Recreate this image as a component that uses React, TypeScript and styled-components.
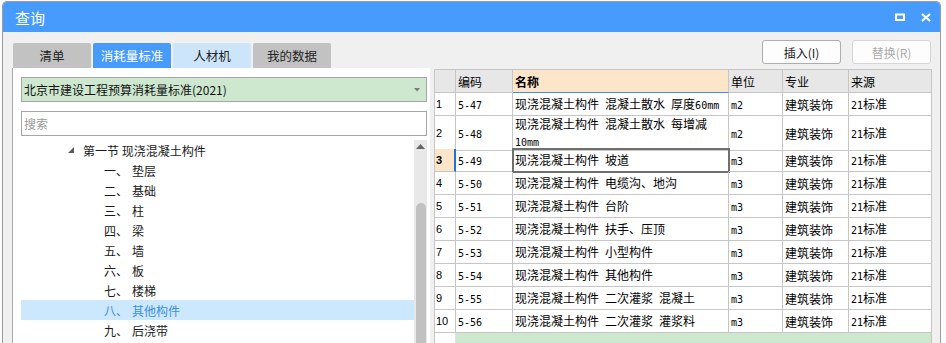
import React from 'react';
import styled, { createGlobalStyle } from 'styled-components';

const GlobalStyle = createGlobalStyle`
  html, body {
    margin: 0;
    padding: 0;
    background: #fbfbfb;
    overflow: hidden;
  }
  body {
    font-family: "Noto Sans CJK SC", "Noto Sans", sans-serif;
    font-size: 12px;
    color: #1a1a1a;
  }
`;

const Window = styled.div`
  box-sizing: border-box;
  width: 939px;
  height: 342px;
  margin: 1px 0 0 2px;
  border: 1px solid #9c9c9c;
  border-bottom: none;
  border-radius: 5px 5px 0 0;
  overflow: hidden;
  display: flex;
  flex-direction: column;
  background: #f0f0f0;
`;

const TitleBar = styled.div`
  height: 30px;
  flex: none;
  background: #479bfd;
  color: #fff;
  display: flex;
  align-items: center;
  justify-content: space-between;
  padding: 0 9px 0 12px;
  font-size: 15px;
`;

const TitleIcons = styled.div`
  display: flex;
  align-items: center;
  gap: 16px;
`;

const Body = styled.div`
  flex: 1;
  display: flex;
  min-height: 0;
`;

const LeftCol = styled.div`
  box-sizing: border-box;
  width: 427px;
  padding: 11px 0 0 9px;
  display: flex;
  flex-direction: column;
`;

const Tabs = styled.div`
  display: flex;
  gap: 2px;
  padding-left: 1px;
`;

type TabKind = 'plain' | 'active' | 'hover';

const tabBg: Record<TabKind, string> = {
  plain: '#c2c2c2',
  active: '#479bfd',
  hover: '#cce5fa',
};

const Tab = styled.div<{ $kind: TabKind }>`
  width: 78px;
  height: 25px;
  border-radius: 2px 2px 0 0;
  background: ${(p) => tabBg[p.$kind]};
  color: ${(p) => (p.$kind === 'active' ? '#fff' : '#222')};
  font-size: 12.5px;
  display: flex;
  align-items: center;
  justify-content: center;
`;

const Panel = styled.div`
  flex: 1;
  background: #fff;
  border-left: 1px solid #a9a9a9;
  padding: 9px 3px 0 8px;
  display: flex;
  flex-direction: column;
  min-height: 0;
`;

const Select = styled.div`
  box-sizing: border-box;
  height: 25px;
  border: 1px solid #a6a6a6;
  background: #cde8cf;
  display: flex;
  align-items: center;
  justify-content: space-between;
  padding: 0 6px 0 2px;
  color: #111;
`;

const Search = styled.div`
  box-sizing: border-box;
  height: 25px;
  margin-top: 9px;
  border: 1px solid #a6a6a6;
  display: flex;
  align-items: center;
  padding-left: 2px;
  color: #9b9b9b;
`;

const Tree = styled.div`
  margin-top: 4px;
  flex: 1;
  display: flex;
  min-height: 0;
`;

const TreeList = styled.div`
  flex: 1;
`;

const TreeRow = styled.div<{ $indent: number; $selected?: boolean }>`
  height: 20px;
  display: flex;
  align-items: center;
  padding-left: ${(p) => p.$indent}px;
  background: ${(p) => (p.$selected ? '#cce8ff' : 'transparent')};
  color: ${(p) => (p.$selected ? '#3b8de4' : '#1a1a1a')};
  white-space: pre;
`;

const Twisty = styled.span`
  display: inline-flex;
  width: 15px;
`;

const ItemNo = styled.span`
  width: 28px;
`;

const ScrollBar = styled.div`
  width: 13px;
  background: #e8e8e8;
  display: flex;
  flex-direction: column;
  align-items: center;
`;

const ScrollArrow = styled.div`
  height: 12px;
  display: flex;
  align-items: center;
  justify-content: center;
`;

const ScrollThumb = styled.div`
  margin-top: 51px;
  width: 10px;
  flex: 1;
  background: #c1c1c1;
  border-radius: 5px 5px 0 0;
`;

const RightCol = styled.div`
  flex: 1;
  box-sizing: border-box;
  padding: 8px 8px 0 4px;
  display: flex;
  flex-direction: column;
`;

const ButtonBar = styled.div`
  display: flex;
  justify-content: flex-end;
  gap: 11px;
  padding-right: 1px;
`;

const Button = styled.div<{ $disabled?: boolean }>`
  box-sizing: border-box;
  width: 79px;
  height: 24px;
  border: 1px solid ${(p) => (p.$disabled ? '#d6d6d6' : '#adadad')};
  border-radius: 3px;
  background: #fdfdfd;
  color: ${(p) => (p.$disabled ? '#ababab' : '#1a1a1a')};
  display: flex;
  align-items: center;
  justify-content: center;
`;

const Grid = styled.div`
  margin-top: 5px;
  width: 498px;
  box-sizing: border-box;
  border-left: 1px solid #c6c6c6;
  border-top: 1px solid #c6c6c6;
  background: #fff;
`;

const Row = styled.div<{ $h: number }>`
  display: grid;
  grid-template-columns: 21px 57px 216px 54px 66px 83px;
  height: ${(p) => p.$h}px;
`;

const Cell = styled.div<{ $bg?: string; $bold?: boolean; $blueBottom?: boolean }>`
  box-sizing: border-box;
  border-right: 1px solid #c6c6c6;
  border-bottom: 1px solid ${(p) => (p.$blueBottom ? '#3d8ee6' : '#c6c6c6')};
  background: ${(p) => p.$bg || 'transparent'};
  font-weight: ${(p) => (p.$bold ? 700 : 400)};
  padding-left: 2px;
  display: flex;
  align-items: center;
  color: #000;
`;

const CellText = styled.span`
  white-space: pre-line;
  line-height: 15px;
`;

const NumCell = styled(Cell)<{ $current?: boolean }>`
  font-family: "Liberation Sans", "DejaVu Sans", sans-serif;
  font-size: 11px;
  padding-left: 1px;
  border-right: ${(p) => (p.$current ? '2px solid #1c74e4' : '1px solid #c6c6c6')};
`;

const NameCell = styled(Cell)<{ $current?: boolean }>`
  outline: ${(p) => (p.$current ? '2px solid #6f6f6f' : 'none')};
  outline-offset: -1px;
`;

const FillRow = styled.div`
  display: grid;
  grid-template-columns: 21px 1fr;
  height: 20px;
`;

const FillNum = styled.div`
  border-right: 1px solid #e2e2e2;
`;

const FillNew = styled.div`
  background: #cde8cf;
  border-right: 1px solid #c6c6c6;
`;

const Lat = styled.span`
  font-family: "DejaVu Sans Mono", "Liberation Mono", monospace;
  font-size: 10px;
`;

const mixed = (s: string) => (
  <CellText>
    {s.split(/([\x20-\x7e]+)/).map((part, i) =>
      /^[\x20-\x7e]+$/.test(part) ? <Lat key={i}>{part}</Lat> : part
    )}
  </CellText>
);

const items = ['垫层', '基础', '柱', '梁', '墙', '板', '楼梯', '其他构件', '后浇带'];
const itemNos = ['一、', '二、', '三、', '四、', '五、', '六、', '七、', '八、', '九、'];

const rows = [
  { code: '5-47', name: '现浇混凝土构件 混凝土散水 厚度60mm', unit: 'm2', h: 23 },
  { code: '5-48', name: '现浇混凝土构件 混凝土散水 每增减\n10mm', unit: 'm2', h: 33 },
  { code: '5-49', name: '现浇混凝土构件 坡道', unit: 'm3', h: 23 },
  { code: '5-50', name: '现浇混凝土构件 电缆沟、地沟', unit: 'm3', h: 23 },
  { code: '5-51', name: '现浇混凝土构件 台阶', unit: 'm3', h: 23 },
  { code: '5-52', name: '现浇混凝土构件 扶手、压顶', unit: 'm3', h: 23 },
  { code: '5-53', name: '现浇混凝土构件 小型构件', unit: 'm3', h: 23 },
  { code: '5-54', name: '现浇混凝土构件 其他构件', unit: 'm3', h: 23 },
  { code: '5-55', name: '现浇混凝土构件 二次灌浆 混凝土', unit: 'm3', h: 23 },
  { code: '5-56', name: '现浇混凝土构件 二次灌浆 灌浆料', unit: 'm3', h: 23 },
];

const HEAD_BG = '#e7e7e7';
const PEACH = '#fde5c9';

const App: React.FC = () => {
  return (
    <>
      <GlobalStyle />
      <Window>
        <TitleBar>
          <span>查询</span>
          <TitleIcons>
            <svg width="10" height="8" viewBox="0 0 10 8">
              <rect x="1" y="1.5" width="8" height="5.5" fill="none" stroke="#fff" strokeWidth="2" />
            </svg>
            <svg width="10" height="9" viewBox="0 0 10 9">
              <path d="M1 1 L9 8 M9 1 L1 8" stroke="#fff" strokeWidth="2.2" />
            </svg>
          </TitleIcons>
        </TitleBar>
        <Body>
          <LeftCol>
            <Tabs>
              <Tab $kind="plain">清单</Tab>
              <Tab $kind="active">消耗量标准</Tab>
              <Tab $kind="hover">人材机</Tab>
              <Tab $kind="plain">我的数据</Tab>
            </Tabs>
            <Panel>
              <Select>
                <span>北京市建设工程预算消耗量标准(2021)</span>
                <svg width="6" height="4" viewBox="0 0 6 4">
                  <path d="M0 0 L6 0 L3 3.5 Z" fill="#7a7a7a" />
                </svg>
              </Select>
              <Search>搜索</Search>
              <Tree>
                <TreeList>
                  <TreeRow $indent={47}>
                    <Twisty>
                      <svg width="6" height="6" viewBox="0 0 6 6">
                        <path d="M6 0 L6 6 L0 6 Z" fill="#5a5a5a" />
                      </svg>
                    </Twisty>
                    第一节 现浇混凝土构件
                  </TreeRow>
                  {items.map((name, i) => (
                    <TreeRow key={name} $indent={83} $selected={i === 7}>
                      <ItemNo>{itemNos[i]}</ItemNo>
                      {name}
                    </TreeRow>
                  ))}
                </TreeList>
                <ScrollBar>
                  <ScrollArrow>
                    <svg width="9" height="5" viewBox="0 0 9 5">
                      <path d="M0 5 L4.5 0 L9 5 Z" fill="#666" />
                    </svg>
                  </ScrollArrow>
                  <ScrollThumb />
                </ScrollBar>
              </Tree>
            </Panel>
          </LeftCol>
          <RightCol>
            <ButtonBar>
              <Button>插入(I)</Button>
              <Button $disabled>替换(R)</Button>
            </ButtonBar>
            <Grid>
              <Row $h={23}>
                <Cell $bg={HEAD_BG} />
                <Cell $bg={HEAD_BG}>编码</Cell>
                <Cell $bg={PEACH} $bold $blueBottom>名称</Cell>
                <Cell $bg={HEAD_BG}>单位</Cell>
                <Cell $bg={HEAD_BG}>专业</Cell>
                <Cell $bg={HEAD_BG}>来源</Cell>
              </Row>
              {rows.map((r, i) => {
                const current = i === 2;
                return (
                  <Row key={r.code} $h={r.h}>
                    <NumCell $current={current} $bg={current ? PEACH : undefined} $bold={current}>
                      {i + 1}
                    </NumCell>
                    <Cell>{mixed(r.code)}</Cell>
                    <NameCell $current={current}>{mixed(r.name)}</NameCell>
                    <Cell>{mixed(r.unit)}</Cell>
                    <Cell>建筑装饰</Cell>
                    <Cell>{mixed('21标准')}</Cell>
                  </Row>
                );
              })}
              <FillRow>
                <FillNum />
                <FillNew />
              </FillRow>
            </Grid>
          </RightCol>
        </Body>
      </Window>
    </>
  );
};

export default App;
